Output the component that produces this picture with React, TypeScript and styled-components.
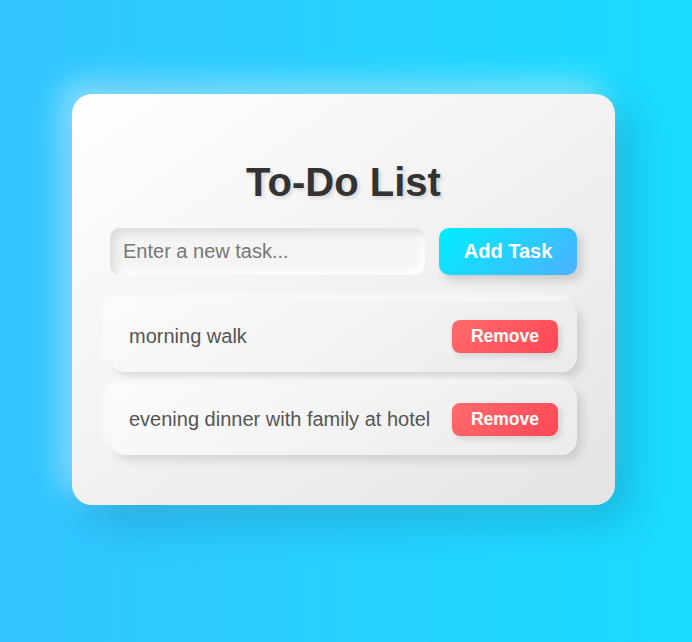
import React, { useState } from 'react';
import styled, { createGlobalStyle } from 'styled-components';

const GlobalStyle = createGlobalStyle`
  html, body {
    margin: 0;
    padding: 0;
    height: 100%;
  }
  body {
    font-family: 'Liberation Sans', Arial, sans-serif;
    background: linear-gradient(90deg, #33c4ff 0%, #1adcff 100%);
    min-height: 642px;
  }
`;

const Page = styled.div`
  padding: 94px 0 0 72px;
`;

const Card = styled.div`
  box-sizing: border-box;
  width: 543px;
  padding: 38px;
  border-radius: 20px;
  background: linear-gradient(145deg, #ffffff, #e4e4e4);
  box-shadow: 16px 16px 40px rgba(0, 60, 90, 0.22),
    -12px -12px 30px rgba(255, 255, 255, 0.45);
`;

const Title = styled.h1`
  margin: 27px 0 23px;
  text-align: center;
  font-size: 40px;
  font-weight: 700;
  line-height: 46px;
  color: #333;
  text-shadow: 2px 2px 4px rgba(0, 0, 0, 0.15);
`;

const InputRow = styled.div`
  display: flex;
  gap: 14px;
  margin-bottom: 26px;
`;

const TaskInput = styled.input`
  flex: 1;
  min-width: 0;
  box-sizing: border-box;
  height: 47px;
  padding: 0 13px;
  border: none;
  outline: none;
  border-radius: 10px;
  background: #f4f4f4;
  box-shadow: inset 5px 5px 10px #dcdcdc, inset -5px -5px 10px #ffffff;
  font-family: inherit;
  font-size: 20px;
  color: #555;
  &::placeholder {
    color: #777;
  }
`;

const AddButton = styled.button`
  width: 138px;
  height: 47px;
  border: none;
  border-radius: 10px;
  background: linear-gradient(135deg, #00effe, #4cb0fe);
  box-shadow: 5px 5px 10px rgba(0, 0, 0, 0.15);
  color: #fff;
  font-family: inherit;
  font-size: 20px;
  font-weight: 700;
  cursor: pointer;
`;

const List = styled.ul`
  list-style: none;
  margin: 0;
  padding: 0;
`;

const Item = styled.li`
  display: flex;
  align-items: center;
  justify-content: space-between;
  padding: 19px;
  margin-bottom: 12px;
  border-radius: 16px;
  background: linear-gradient(145deg, #fbfbfb, #ebebeb);
  box-shadow: 5px 5px 10px rgba(0, 0, 0, 0.12),
    -5px -5px 10px rgba(255, 255, 255, 0.8);
  font-size: 20px;
  color: #555;
`;

const RemoveButton = styled.button`
  height: 33px;
  padding: 0 19px;
  border: none;
  border-radius: 8px;
  background: linear-gradient(135deg, #ff6b6b, #ff4757);
  box-shadow: 3px 3px 6px rgba(0, 0, 0, 0.12);
  color: #fff;
  font-family: inherit;
  font-size: 17.5px;
  font-weight: 700;
  cursor: pointer;
`;

export default function App() {
  const [tasks, setTasks] = useState(['morning walk', 'evening dinner with family at hotel']);
  const [text, setText] = useState('');

  const addTask = () => {
    if (!text.trim()) return;
    setTasks([...tasks, text.trim()]);
    setText('');
  };

  return (
    <Page>
      <GlobalStyle />
      <Card>
        <Title>To-Do List</Title>
        <InputRow>
          <TaskInput
            placeholder="Enter a new task..."
            value={text}
            onChange={(e) => setText(e.target.value)}
          />
          <AddButton onClick={addTask}>Add Task</AddButton>
        </InputRow>
        <List>
          {tasks.map((t, i) => (
            <Item key={i}>
              {t}
              <RemoveButton onClick={() => setTasks(tasks.filter((_, j) => j !== i))}>
                Remove
              </RemoveButton>
            </Item>
          ))}
        </List>
      </Card>
    </Page>
  );
}
